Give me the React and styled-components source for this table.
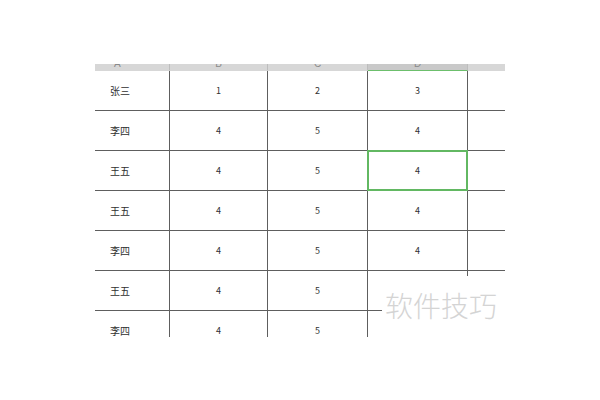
import styled, { createGlobalStyle } from 'styled-components';

const GlobalStyle = createGlobalStyle`
  html, body {
    margin: 0;
    background: #fff;
  }
  body {
    font-family: "Noto Sans CJK SC", "Liberation Sans", sans-serif;
  }
`;

const COLS = '75px 98px 100px 100px 37px';

const Page = styled.div`
  position: relative;
  width: 600px;
  height: 400px;
  overflow: hidden;
  padding: 64px 0 0 95px;
  box-sizing: border-box;
`;

const Sheet = styled.div`
  width: 410px;
  height: 273px;
  overflow: hidden;
`;

const HeaderRow = styled.div`
  display: grid;
  grid-template-columns: ${COLS};
  height: 7px;
  overflow: hidden;
`;

const HeaderCell = styled.div`
  background: ${(p) => (p.$active ? '#c9c9c9' : '#d7d7d7')};
  border-right: ${(p) => (p.$last ? 'none' : '1px solid #bdbdbd')};
  border-bottom: 1px solid ${(p) => (p.$active ? '#6cbf6c' : '#d7d7d7')};
  box-sizing: border-box;
  display: flex;
  justify-content: ${(p) => (p.$left ? 'flex-start' : 'center')};
  padding-left: ${(p) => (p.$left ? '19px' : '0')};
  font-family: "Liberation Sans", sans-serif;
  font-size: 10px;
  line-height: 10px;
  color: #8a8a8a;
  span {
    margin-top: -5px;
  }
`;

const Row = styled.div`
  display: grid;
  grid-template-columns: ${COLS};
  height: 40px;
`;

const Cell = styled.div`
  position: relative;
  box-sizing: border-box;
  border-bottom: 1px solid #5e5e5e;
  border-right: ${(p) => (p.$last ? 'none' : '1px solid #5e5e5e')};
  display: flex;
  align-items: center;
  justify-content: ${(p) => (p.$left ? 'flex-start' : 'center')};
  padding-left: ${(p) => (p.$left ? '15px' : '0')};
  font-size: ${(p) => (p.$left ? '10px' : '9px')};
  color: #2f2f2f;

  ${(p) =>
    p.$selected &&
    `
    &::after {
      content: '';
      position: absolute;
      left: -1px;
      top: -1px;
      right: -1px;
      bottom: -1px;
      border: 2px solid #62b862;
    }
  `}
`;

const Watermark = styled.div`
  position: absolute;
  left: 382px;
  top: 276px;
  width: 140px;
  height: 80px;
  background: #fff;
  padding: 13px 0 0 3px;
  box-sizing: border-box;
  font-family: "Noto Sans CJK SC", sans-serif;
  font-size: 28px;
  font-weight: 300;
  line-height: 32px;
  color: #d4d4d4;
`;

const rows = [
  ['张三', '1', '2', '3'],
  ['李四', '4', '5', '4'],
  ['王五', '4', '5', '4'],
  ['王五', '4', '5', '4'],
  ['李四', '4', '5', '4'],
  ['王五', '4', '5', ''],
  ['李四', '4', '5', ''],
];

export default function App() {
  return (
    <>
      <GlobalStyle />
      <Page>
        <Sheet>
          <HeaderRow>
            <HeaderCell $left><span>A</span></HeaderCell>
            <HeaderCell><span>B</span></HeaderCell>
            <HeaderCell><span>C</span></HeaderCell>
            <HeaderCell $active><span>D</span></HeaderCell>
            <HeaderCell $last />
          </HeaderRow>
          {rows.map((r, i) => (
            <Row key={i}>
              <Cell $left>{r[0]}</Cell>
              <Cell>{r[1]}</Cell>
              <Cell>{r[2]}</Cell>
              <Cell $selected={i === 2}>{r[3]}</Cell>
              <Cell $last />
            </Row>
          ))}
        </Sheet>
        <Watermark>软件技巧</Watermark>
      </Page>
    </>
  );
}
